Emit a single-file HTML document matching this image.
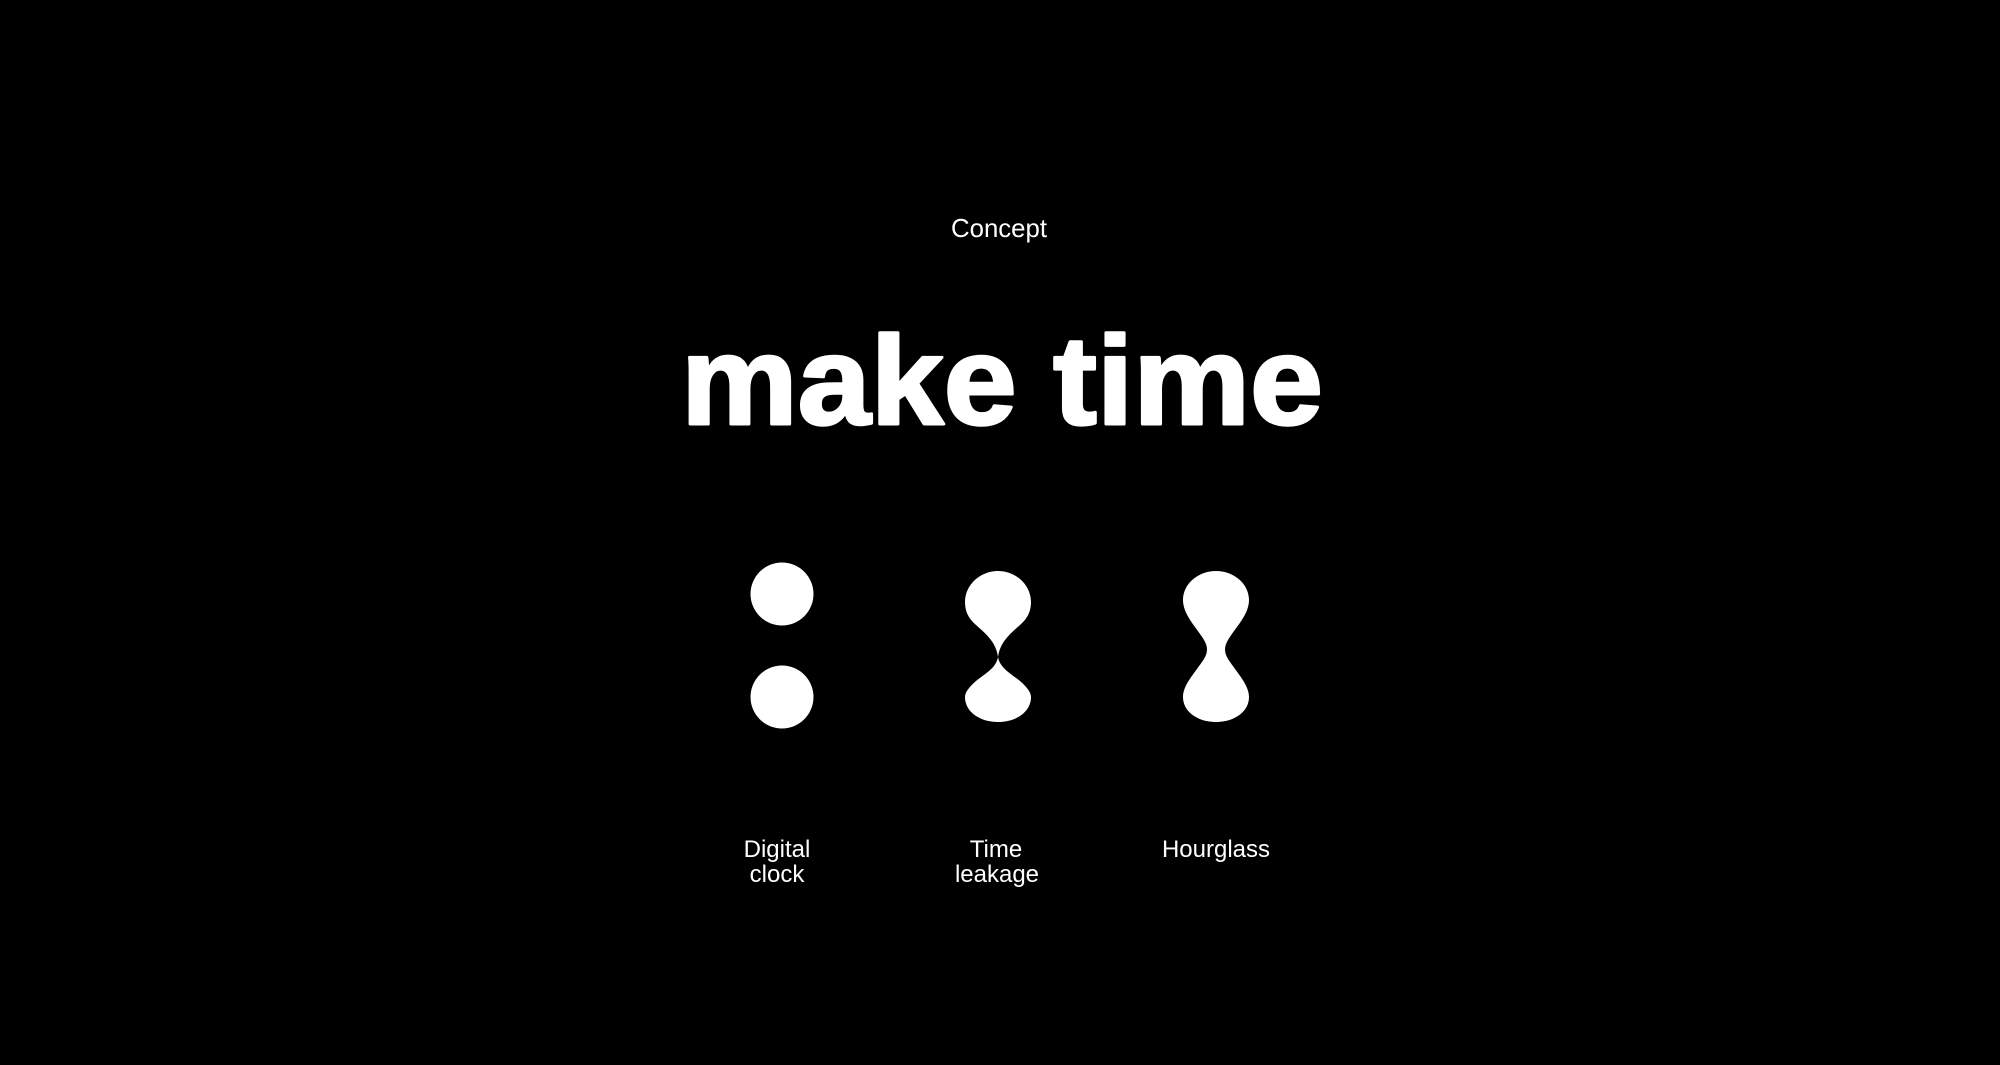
<!DOCTYPE html>
<html><head><meta charset="utf-8"><style>
html,body{margin:0;padding:0;background:#000;width:2000px;height:1065px;overflow:hidden}
</style></head><body>
<svg width="2000" height="1065" viewBox="0 0 2000 1065" xmlns="http://www.w3.org/2000/svg" style="display:block">
<rect width="2000" height="1065" fill="#000"/>
<text x="999" y="237" fill="#fff" font-family="Liberation Sans, sans-serif" font-size="26" text-anchor="middle" textLength="96" lengthAdjust="spacingAndGlyphs">Concept</text>
<text x="681" y="424" fill="#fff" stroke="#fff" stroke-width="3" stroke-linejoin="round" font-family="Liberation Sans, sans-serif" font-weight="bold" font-size="126" textLength="642" lengthAdjust="spacingAndGlyphs">make time</text>
<ellipse cx="782" cy="594" rx="31.5" ry="31.5" fill="#fff"/>
<ellipse cx="782" cy="697" rx="31.5" ry="31.5" fill="#fff"/>
<path fill="#fff" d="M998,657 C996,642 986,634 976,625 C968,618 965,611 965,602 C965,585 980,571 998,571 C1016,571 1031,585 1031,602 C1031,611 1028,618 1020,625 C1010,634 1000,642 998,657 Z"/>
<path fill="#fff" d="M998,657 C1000,668 1010,673 1020,681 C1028,688 1031,693 1031,697 C1031,712 1016,722 998,722 C980,722 965,712 965,697 C965,693 968,688 976,681 C986,673 996,668 998,657 Z"/>
<path fill="#fff" d="M1216,571 C1234,571 1249,584 1249,600 C1249,615 1235,628 1228,640 C1224,647 1224,652 1228,659 C1238,674 1249,685 1249,697 C1249,712 1234,722 1216,722 C1198,722 1183,712 1183,697 C1183,685 1194,674 1204,659 C1208,652 1208,647 1204,640 C1197,628 1183,615 1183,600 C1183,584 1198,571 1216,571 Z"/>
<g fill="#fff" font-family="Liberation Sans, sans-serif" font-size="24" text-anchor="middle">
<text x="777" y="857">Digital</text>
<text x="777" y="882">clock</text>
<text x="996" y="857">Time</text>
<text x="997" y="882">leakage</text>
<text x="1216" y="857">Hourglass</text>
</g>
</svg>
</body></html>
